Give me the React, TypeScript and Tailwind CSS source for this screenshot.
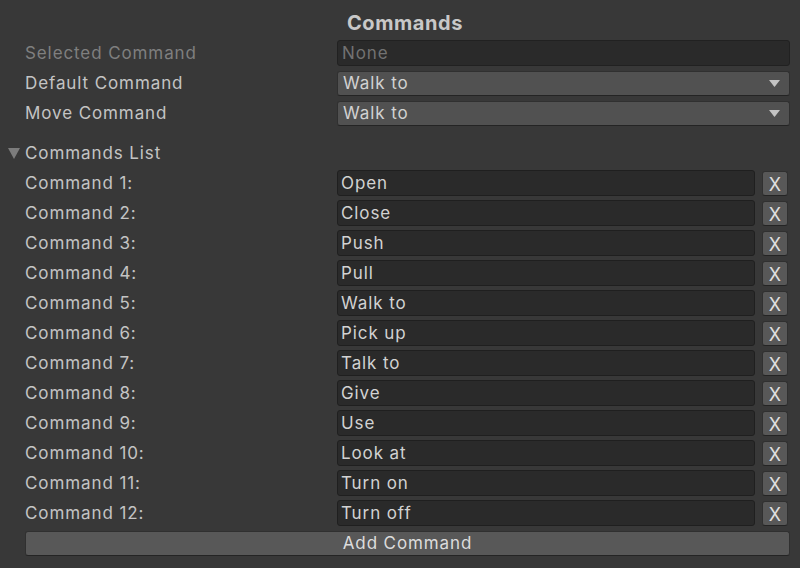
import React from "react";

const commands = [
  "Open",
  "Close",
  "Push",
  "Pull",
  "Walk to",
  "Pick up",
  "Talk to",
  "Give",
  "Use",
  "Look at",
  "Turn on",
  "Turn off",
];

function Dropdown({ value }: { value: string }) {
  return (
    <div className="flex-1 h-[25px] flex items-center justify-between pl-[5px] pr-[9px] bg-[#515151] rounded-[3px] border border-[#303030] border-b-[#242424] text-[#d2d2d2]">
      <span className="pt-[2px]">{value}</span>
      <svg width="11" height="7" viewBox="0 0 11 7">
        <polygon points="0,0 11,0 5.5,7" fill="#c4c4c4" />
      </svg>
    </div>
  );
}

export default function App() {
  return (
    <div
      className="w-[800px] h-[568px] bg-[#383838] text-[17px] tracking-[0.9px] text-[#c4c4c4] overflow-hidden"
      style={{ fontFamily: "Inter, 'Noto Sans', sans-serif" }}
    >
      <div className="h-[38px] pt-[11px] pl-[10px] text-center">
        <h1 className="text-[20px] leading-[24px] font-bold tracking-[0.6px] text-[#c8c8c8]">Commands</h1>
      </div>

      <div className="pl-[25px] pr-[10px]">
        <div className="h-[30px] flex items-center">
          <div className="w-[312px] pt-[2px] text-[#7f7f7f]">Selected Command</div>
          <div className="flex-1 h-[26px] flex items-center pl-[4px] pt-[2px] bg-[#2a2a2a] rounded-[3px] border border-[#212121] text-[#727272]">
            None
          </div>
        </div>
        <div className="h-[30px] flex items-center">
          <div className="w-[312px] pt-[2px]">Default Command</div>
          <Dropdown value="Walk to" />
        </div>
        <div className="h-[30px] flex items-center">
          <div className="w-[312px] pt-[2px]">Move Command</div>
          <Dropdown value="Walk to" />
        </div>
      </div>

      <div className="mt-[10px] h-[30px] flex items-center pl-[8px]">
        <svg width="12" height="11" viewBox="0 0 12 11" className="mr-[5px]">
          <polygon points="0,0 12,0 6,11" fill="#7c7c7c" />
        </svg>
        <span className="pt-[2px]">Commands List</span>
      </div>

      <div className="pl-[25px] pr-[10px]">
        {commands.map((c, i) => (
          <div key={i} className="h-[30px] flex items-center">
            <div className="w-[312px] pt-[2px]">Command {i + 1}:</div>
            <div className="flex-1 h-[26px] flex items-center pl-[3px] pt-[2px] bg-[#2a2a2a] rounded-[3px] border border-[#1f1f1f] text-[#d2d2d2]">
              {c}
            </div>
            <button className="ml-[7px] mr-[2px] w-[26px] h-[25px] flex items-center justify-center pt-[2px] bg-[#585858] rounded-[3px] border border-[#303030] border-b-[#242424] text-[18px] text-[#e0e0e0] tracking-normal">
              X
            </button>
          </div>
        ))}
        <div className="h-[30px] flex items-center">
          <button className="w-full h-[25px] flex items-center justify-center pt-[2px] bg-[#585858] rounded-[3px] border border-[#303030] border-b-[#242424] text-[#dcdcdc]">
            Add Command
          </button>
        </div>
      </div>
    </div>
  );
}
